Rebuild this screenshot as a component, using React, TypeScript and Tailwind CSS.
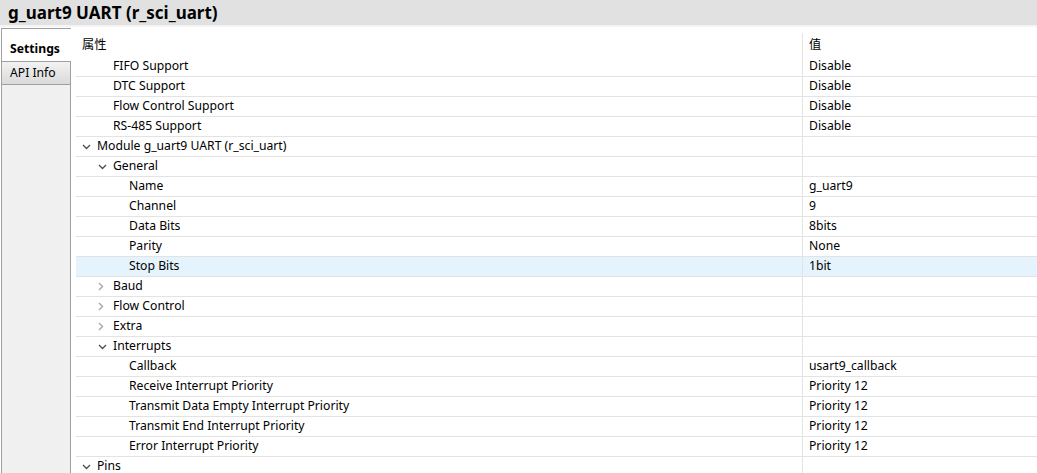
import React from "react";

type Row = {
  label: string;
  value?: string;
  level: number; // indent level for the label text
  toggle?: "open" | "closed";
  selected?: boolean;
};

const rows: Row[] = [
  { label: "FIFO Support", value: "Disable", level: 1 },
  { label: "DTC Support", value: "Disable", level: 1 },
  { label: "Flow Control Support", value: "Disable", level: 1 },
  { label: "RS-485 Support", value: "Disable", level: 1 },
  { label: "Module g_uart9 UART (r_sci_uart)", level: 0, toggle: "open" },
  { label: "General", level: 1, toggle: "open" },
  { label: "Name", value: "g_uart9", level: 2 },
  { label: "Channel", value: "9", level: 2 },
  { label: "Data Bits", value: "8bits", level: 2 },
  { label: "Parity", value: "None", level: 2 },
  { label: "Stop Bits", value: "1bit", level: 2, selected: true },
  { label: "Baud", level: 1, toggle: "closed" },
  { label: "Flow Control", level: 1, toggle: "closed" },
  { label: "Extra", level: 1, toggle: "closed" },
  { label: "Interrupts", level: 1, toggle: "open" },
  { label: "Callback", value: "usart9_callback", level: 2 },
  { label: "Receive Interrupt Priority", value: "Priority 12", level: 2 },
  { label: "Transmit Data Empty Interrupt Priority", value: "Priority 12", level: 2 },
  { label: "Transmit End Interrupt Priority", value: "Priority 12", level: 2 },
  { label: "Error Interrupt Priority", value: "Priority 12", level: 2 },
  { label: "Pins", level: 0, toggle: "open" },
];

const indentClass = ["pl-[6px]", "pl-[22px]", "pl-[38px]"];

function Chevron({ open }: { open: boolean }) {
  if (open) {
    return (
      <svg width="9" height="6" viewBox="0 0 9 6" className="shrink-0">
        <path d="M1 1 L4.5 4.5 L8 1" fill="none" stroke="#4d4d4d" strokeWidth="1.3" />
      </svg>
    );
  }
  return (
    <svg width="6" height="9" viewBox="0 0 6 9" className="shrink-0">
      <path d="M1 1 L4.5 4.5 L1 8" fill="none" stroke="#a6a6a6" strokeWidth="1.4" />
    </svg>
  );
}

function TreeRow({ row }: { row: Row }) {
  return (
    <div
      className={`flex h-[20px] shrink-0 border-b border-[#e3e3e3] ${row.selected ? "bg-[#e5f3fd]" : ""}`}
    >
      <div className={`w-[726px] flex items-center ${indentClass[row.level]}`}>
        <span className="w-[15px] flex items-center justify-start">
          {row.toggle && <Chevron open={row.toggle === "open"} />}
        </span>
        <span className="whitespace-nowrap">{row.label}</span>
      </div>
      <div className="flex-1 border-l border-[#e3e3e3] flex items-center pl-[6px] whitespace-nowrap">
        {row.value}
      </div>
    </div>
  );
}

export default function App() {
  return (
    <div
      className="w-[1037px] h-[473px] overflow-hidden bg-white text-[12.2px] text-black flex flex-col"
      style={{ fontFamily: '"Noto Sans", "Noto Sans CJK SC", sans-serif' }}
    >
      {/* Title bar */}
      <div className="h-[25px] shrink-0 bg-[#e1e1e1] flex items-center pl-[8px]">
        <span className="text-[17px] font-bold leading-none">g_uart9 UART (r_sci_uart)</span>
      </div>
      <div className="h-[2px] shrink-0 bg-[#f4f4f4]" />

      <div className="flex flex-1 min-h-0">
        {/* Tab column */}
        <div className="w-[71px] shrink-0 flex flex-col pt-px">
          <div className="flex flex-col border-l border-[#a0a0a0] ml-px flex-1">
            <div className="h-[33px] bg-white border-t border-[#a0a0a0] flex items-end pb-[3px] pl-[8px] font-bold">
              Settings
            </div>
            <div className="h-[24px] bg-gradient-to-b from-[#f2f2f2] to-[#dadada] border-y border-[#a0a0a0] border-r border-r-[#a0a0a0] flex items-center pl-[8px]">
              API Info
            </div>
            <div className="flex-1 bg-[#f0f0f0] border-r border-[#a0a0a0]" />
          </div>
        </div>

        {/* Property table */}
        <div className="flex-1 pl-[5px] pt-[6px] flex flex-col">
          <div className="flex h-[24px] shrink-0">
            <div className="w-[726px] flex items-center pl-[6px]">属性</div>
            <div className="flex-1 border-l border-[#e3e3e3] flex items-center pl-[6px]">值</div>
          </div>
          {rows.map((r, i) => (
            <TreeRow key={i} row={r} />
          ))}
        </div>
      </div>
    </div>
  );
}
